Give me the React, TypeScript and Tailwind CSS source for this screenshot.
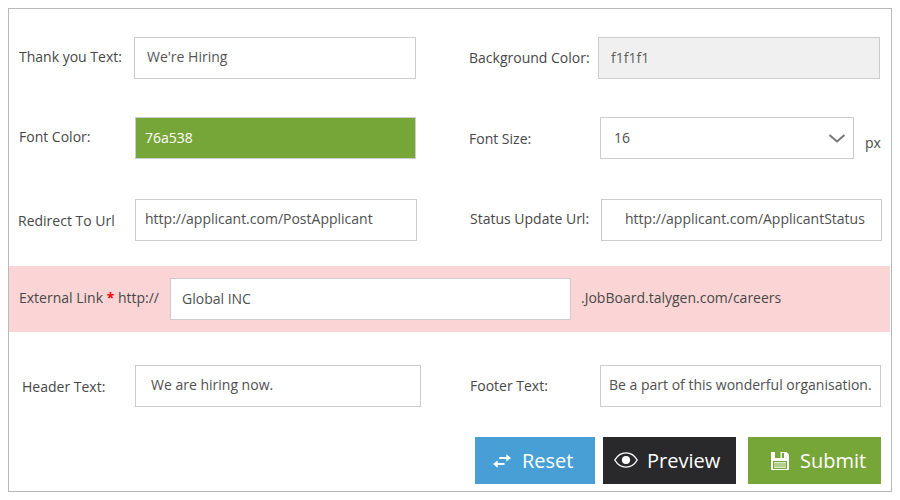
import type { ReactNode } from "react";

type BoxProps = { className: string; children: ReactNode };

function Label({ className, children }: BoxProps) {
  return (
    <div className={`shrink-0 whitespace-nowrap text-sm leading-5 text-[#484848] ${className}`}>
      {children}
    </div>
  );
}

function Field({ className, children }: BoxProps) {
  return (
    <div
      className={`h-[42px] shrink-0 whitespace-nowrap border border-[#cccccc] text-sm leading-5 ${className}`}
    >
      {children}
    </div>
  );
}

function SwapIcon() {
  return (
    <svg className="h-[14px] w-[18px] shrink-0" viewBox="0 0 18 14" fill="white">
      <path d="M6.300 2.900h7V0.300L18 4l-4.700 3.600V4.900H6.300z" />
      <path d="M11.500 9h-6.800V6.400L0 10.100l4.700 3.700V11.100h6.800z" />
    </svg>
  );
}

function EyeIcon() {
  return (
    <svg className="-mt-px h-4 w-6 shrink-0" viewBox="0 0 24 16" fill="none" stroke="white" strokeWidth="1.400">
      <path d="M0.800 8C3.500 3.400 7.500 0.900 12 0.900s8.500 2.500 11.200 7.100C20.500 12.600 16.500 15.100 12 15.100S3.500 12.600 0.800 8z" />
      <circle cx="12" cy="8" r="4.100" fill="white" stroke="none" />
    </svg>
  );
}

function SaveIcon() {
  return (
    <svg className="mt-px h-[18px] w-[18px] shrink-0" viewBox="0 0 18 18">
      <path fill="white" d="M0 0h15.500L18 2.500V18H0z" />
      <path fill="#77a638" d="M4 0h5.500v6H4zM10.800 1h2.200v5h-2.200zM2 9h14v8H2z" />
      <path fill="#dcebc9" d="M3 10h12v6H3z" />
      <path stroke="#77a638" strokeWidth="0.800" d="M3 12h12M3 14h12" />
    </svg>
  );
}

export default function App() {
  return (
    <main className="h-[500px] w-[900px] bg-white p-2 font-['Open_Sans',sans-serif]">
      <section className="h-[484px] w-[884px] border border-[#b9b9b9] pt-7">
        <div className="flex h-20 items-start">
          <Label className="ml-2.5 mt-2.5 w-[115px]">Thank you Text:</Label>
          <Field className="w-[282px] pl-3 pt-[9px] text-[#555555]">We're Hiring</Field>
          <Label className="ml-[53px] mt-[11px] w-[129px]">Background Color:</Label>
          <Field className="w-[282px] bg-[#f0f0f0] pl-3 pt-2.5 text-[#606060]">f1f1f1</Field>
        </div>
        <div className="flex h-[82px] items-start">
          <Label className="ml-2.5 mt-2.5 w-[116px]">Font Color:</Label>
          <Field className="w-[281px] bg-[#77a638] pl-[9px] pt-2.5 text-white">76a538</Field>
          <Label className="ml-[53px] mt-3 w-[131px]">Font Size:</Label>
          <Field className="flex w-[254px] justify-between pl-[13px] pr-[7px] pt-2.5 text-[#505050]">
            16
            <svg className="mt-1.5 h-[9px] w-[18px]" viewBox="0 0 18 9" fill="none" stroke="#777777" strokeWidth="2">
              <path d="M1.500 1L9 7.500L16.500 1" />
            </svg>
          </Field>
          <Label className="ml-[11px] mt-4">px</Label>
        </div>
        <div className="flex h-[67px] items-start">
          <Label className="ml-[9px] mt-3 w-[117px]">Redirect To Url</Label>
          <Field className="w-[282px] pl-[9px] pt-[9px] text-[#505050]">http://applicant.com/PostApplicant</Field>
          <Label className="ml-[53px] mt-2.5 w-[131px]">Status Update Url:</Label>
          <Field className="w-[281px] pl-[23px] pt-[9px] text-[#505050]">http://applicant.com/ApplicantStatus</Field>
        </div>
        <div className="flex h-[66px] w-[881px] items-start bg-[#fbd5d5] pt-3">
          <Label className="ml-2.5 mt-2.5 w-[151px]">
            External Link <b className="text-[#ff0000]">*</b> http://
          </Label>
          <Field className="w-[401px] bg-white pl-[11px] pt-2.5 text-[#505050]">Global INC</Field>
          <Label className="ml-2.5 mt-2.5">.JobBoard.talygen.com/careers</Label>
        </div>
        <div className="mt-[33px] flex h-[72px] items-start">
          <Label className="ml-[13px] mt-3 w-[113px]">Header Text:</Label>
          <Field className="w-[286px] pl-[15px] pt-[9px] text-[#505050]">We are hiring now.</Field>
          <Label className="ml-[49px] mt-[11px] w-[130px]">Footer Text:</Label>
          <Field className="w-[281px] pl-2 pt-[9px] text-[#505050]">Be a part of this wonderful organisation.</Field>
        </div>
        <div className="ml-[466px] flex h-[47px] text-xl font-[370] leading-[47px] text-white">
          <button className="flex w-[120px] items-center bg-[#479fd5] pl-[18px]">
            <SwapIcon />
            <span className="ml-[11px]">Reset</span>
          </button>
          <button className="ml-2 flex w-[133px] items-center bg-[#29292b] pl-[11px]">
            <EyeIcon />
            <span className="ml-[9px]">Preview</span>
          </button>
          <button className="ml-3 flex w-[133px] items-center bg-[#77a638] pl-[23px]">
            <SaveIcon />
            <span className="ml-[11px]">Submit</span>
          </button>
        </div>
      </section>
    </main>
  );
}
